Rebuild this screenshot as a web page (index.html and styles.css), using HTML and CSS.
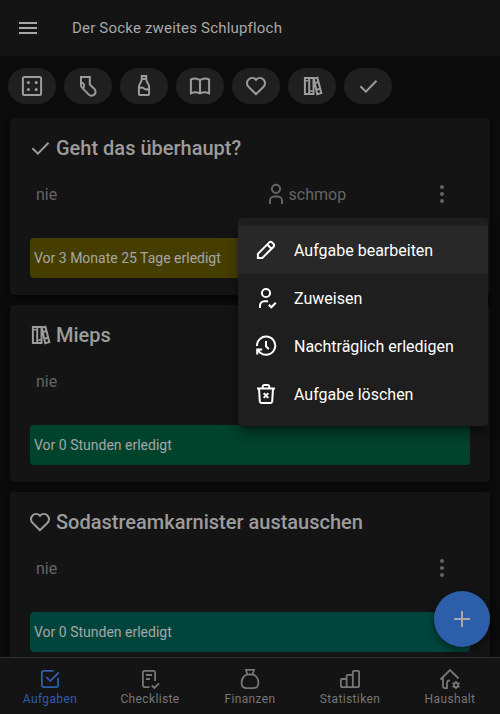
FILE: index.html
```html
<!DOCTYPE html>
<html lang="de">
<head>
<meta charset="utf-8">
<title>Der Socke zweites Schlupfloch</title>
<link rel="stylesheet" href="styles.css">
</head>
<body>
<svg class="defs" width="0" height="0" aria-hidden="true">
  <symbol id="heart" viewBox="0 0 24 24"><path d="M12 20.200l-7.400-7.300a5.100 5.100 0 0 1 0-7.400c2-1.900 5.100-1.900 7.100 0l.3.400.3-.4c2-1.900 5.100-1.900 7.100 0a5.100 5.100 0 0 1 0 7.400z"/></symbol>
  <symbol id="check" viewBox="0 0 24 24"><path d="M4.400 12.300l5.500 5.300L20.500 6.800"/></symbol>
  <symbol id="books" viewBox="0 0 24 24"><path d="M4.900 3.900h4.300v16.200H4.900zM9.200 3.900h4.300v16.200H9.200zM13.800 4.600l3.600-.9 3.900 15.400-4.100 1.100zM14.900 9l3.800-1M16.200 15.700l4-1M7 6v1.500M11.400 16.300v1.600"/></symbol>
  <symbol id="dots" viewBox="0 0 24 24"><g fill="currentColor" stroke="none"><circle cx="12" cy="5" r="2"/><circle cx="12" cy="12" r="2"/><circle cx="12" cy="19" r="2"/></g></symbol>
</svg>

<header class="topbar">
  <svg class="icon" viewBox="0 0 24 24"><path d="M3 7h18M3 12h18M3 17h18"/></svg>
  <h1>Der Socke zweites Schlupfloch</h1>
</header>

<nav class="chips">
  <button class="chip"><svg class="icon" viewBox="0 0 24 24"><rect x="2.900" y="2.900" width="18.200" height="18.200" rx="1.500"/><g fill="currentColor" stroke="none"><circle cx="8.400" cy="8.500" r="1.500"/><circle cx="16.200" cy="8.500" r="1.500"/><circle cx="8.400" cy="15.500" r="1.500"/><circle cx="16.200" cy="15.500" r="1.500"/></g></svg></button>
  <button class="chip"><svg class="icon" viewBox="0 0 24 24"><path d="M5 2.900h8.800v7.600l4.500 4.400a3.900 3.900 0 0 1-5.500 5.700l-7-7.200a3 3 0 0 1-.8-2.200zM5 8.300c2.800.5 4.200 3 2.300 6.300"/></svg></button>
  <button class="chip"><svg class="icon" viewBox="0 0 24 24"><path d="M9.800 1.900h4.400v3H9.800zM9.800 5c0 3.500-2.900 4.500-2.900 8v6.500c0 1 .7 1.600 1.600 1.600h7c.9 0 1.600-.6 1.600-1.600V13c0-3.500-2.900-4.500-2.900-8M6.900 14.500c2.200-1.800 3.600-1.200 5.100 0s3 1.700 5.100 0"/></svg></button>
  <button class="chip"><svg class="icon" viewBox="0 0 24 24"><path d="M12 6.300C9.500 4.300 5.500 4.300 2.900 5.500v13.800c2.600-1.200 6.600-1.200 9.100.2 2.500-1.400 6.500-1.400 9.100-.2V5.500c-2.600-1.200-6.600-1.200-9.100.8zv13"/></svg></button>
  <button class="chip"><svg class="icon"><use href="#heart"/></svg></button>
  <button class="chip"><svg class="icon"><use href="#books"/></svg></button>
  <button class="chip"><svg class="icon"><use href="#check"/></svg></button>
</nav>

<main class="tasks">
  <article class="card">
    <h2><svg class="icon"><use href="#check"/></svg>Geht das überhaupt?</h2>
    <div class="meta">
      <span class="due">nie</span>
      <span class="person"><svg class="icon" viewBox="0 0 24 24"><circle cx="12" cy="6.800" r="4.100"/><path d="M6 22v-3.300a4.200 4.200 0 0 1 4.200-4.200h3.600a4.200 4.200 0 0 1 4.200 4.200V22"/></svg>schmop</span>
      <svg class="icon"><use href="#dots"/></svg>
    </div>
    <div class="status olive">Vor 3 Monate 25 Tage erledigt</div>
  </article>
  <article class="card">
    <h2><svg class="icon"><use href="#books"/></svg>Mieps</h2>
    <div class="meta">
      <span class="due">nie</span>
      <span class="person"></span>
      <svg class="icon"><use href="#dots"/></svg>
    </div>
    <div class="status green">Vor 0 Stunden erledigt</div>
  </article>
  <article class="card">
    <h2><svg class="icon"><use href="#heart"/></svg>Sodastreamkarnister austauschen</h2>
    <div class="meta">
      <span class="due">nie</span>
      <span class="person"></span>
      <svg class="icon"><use href="#dots"/></svg>
    </div>
    <div class="status teal">Vor 0 Stunden erledigt</div>
  </article>
</main>

<button class="fab"><svg class="icon" viewBox="0 0 24 24"><path d="M12 4v16M4 12h16"/></svg></button>

<nav class="tabs">
  <a class="tab active"><svg class="icon" viewBox="0 0 24 24"><path d="M15.500 3.900H5.400c-.8 0-1.500.7-1.500 1.500v13.200c0 .8.7 1.500 1.500 1.500h13.200c.8 0 1.500-.7 1.500-1.500V11M8.300 10.200l3.900 3.900 8.600-8.600"/></svg>Aufgaben</a>
  <a class="tab"><svg class="icon" viewBox="0 0 24 24"><path d="M11.500 20.100H6.400c-.8 0-1.500-.7-1.500-1.500V5.400c0-.8.7-1.500 1.500-1.500h9.200c.8 0 1.500.7 1.500 1.500V14M8 8h6M8 12h4M13.800 18.500l2.500 2.500 4.700-4.700"/></svg>Checkliste</a>
  <a class="tab"><svg class="icon" viewBox="0 0 24 24"><path d="M8 2.900h8l-1.300 4.200c3.600 1.600 5.700 5.500 5.700 8.800 0 3.500-2.500 5.200-5.400 5.200H9c-2.900 0-5.400-1.700-5.400-5.200 0-3.300 2.100-7.200 5.700-8.800zM9 7.500h6"/></svg>Finanzen</a>
  <a class="tab"><svg class="icon" viewBox="0 0 24 24"><path d="M2.900 13c0-.6.400-1 1-1h4.700v8.100H3.900c-.6 0-1-.4-1-1zM8.600 20.100V8.800c0-.6.400-1 1-1h5.200v12.300zM14.800 20.100V4.900c0-.6.400-1 1-1h4.300c.6 0 1 .4 1 1v14.200c0 .6-.4 1-1 1z"/></svg>Statistiken</a>
  <a class="tab"><svg class="icon" viewBox="0 0 24 24"><path d="M2.500 12.500L12 3l8.500 8.500M5 11v8.600c0 .8.600 1.500 1.400 1.500H9v-5.300c0-1.500 1-2.500 3-2.500"/><circle cx="18" cy="18" r="2.200"/><path d="M18 14v2M18 20v2M14.500 16l1.700 1M19.800 19l1.700 1M14.500 20l1.700-1M19.800 17l1.700-1"/></svg>Haushalt</a>
</nav>

<div class="menu">
  <a class="item selected"><svg class="icon" viewBox="0 0 24 24"><path d="M3.900 20.100v-4.300L15.300 4.400a1.900 1.900 0 0 1 2.700 0l1.600 1.600a1.900 1.900 0 0 1 0 2.700L8.200 20.100zM13.200 6.500l4.300 4.300"/></svg>Aufgabe bearbeiten</a>
  <a class="item"><svg class="icon" viewBox="0 0 24 24"><circle cx="12" cy="7" r="4.100"/><path d="M6 22v-2.500a4.200 4.200 0 0 1 4.200-4.200h3.900M14.800 18.800l2.500 2.500 4.500-4.500"/></svg>Zuweisen</a>
  <a class="item"><svg class="icon" viewBox="0 0 24 24"><path d="M3 12a9.100 9.100 0 1 1 3.300 6.700L3.200 15.700M3.200 20.500v-4.900h5M12 7v5.300l2.800 2.800"/></svg>Nachträglich erledigen</a>
  <a class="item"><svg class="icon" viewBox="0 0 24 24"><path d="M3 6.400h18M8.700 6.200V4.400c0-.8.600-1.500 1.400-1.500h3.800c.8 0 1.400.7 1.400 1.500v1.800M5 6.500l.8 13c.1.900.7 1.600 1.600 1.600h9.200c.9 0 1.500-.7 1.600-1.600l.8-13M9.700 11.300l4.600 4.600M14.300 11.300l-4.600 4.600"/></svg>Aufgabe löschen</a>
</div>
</body>
</html>
```
FILE: styles.css
```css
* { box-sizing: border-box; }

html, body { height: 100%; }

body {
  margin: 0;
  overflow: hidden;
  display: flex;
  flex-direction: column;
  background: #0b0b0b;
  color: #9c9c9c;
  font-family: Roboto, "Liberation Sans", sans-serif;
  font-size: 16px;
}

h1, h2 { margin: 0; }

button { border: 0; padding: 0; font: inherit; color: inherit; }

.defs { position: absolute; }

.icon {
  display: block;
  flex: none;
  width: 24px;
  height: 24px;
  fill: none;
  stroke: currentColor;
  stroke-width: 2;
}

.topbar {
  flex: none;
  height: 56px;
  padding: 0 16px;
  display: flex;
  align-items: center;
  gap: 32px;
  background: #141414;
  color: #a8a8a8;
}

.topbar h1 {
  font-size: 15px;
  font-weight: 400;
  letter-spacing: 0.19px;
}

.chips {
  flex: none;
  display: flex;
  gap: 8px;
  padding: 12px 8px 14px;
}

.chip {
  width: 48px;
  height: 36px;
  display: grid;
  place-items: center;
  border-radius: 18px;
  background: #1f1f1f;
}

.tasks {
  flex: 1;
  min-height: 0;
  overflow: hidden;
  display: flex;
  flex-direction: column;
  gap: 10px;
  padding: 0 10px;
}

.card {
  flex: none;
  height: 177px;
  padding: 18px 20px 17px;
  border-radius: 4px;
  background: #141414;
  box-shadow: 0 2px 5px #050505;
}

.card h2 {
  display: flex;
  align-items: center;
  gap: 4px;
  height: 24px;
  margin-left: -2px;
  font-size: 20px;
  font-weight: 500;
  line-height: 24px;
}

.meta {
  display: flex;
  align-items: center;
  height: 24px;
  margin: 22px 16px 32px 6px;
  color: #646464;
}

.due { width: 228px; }

.person {
  flex: 1;
  display: flex;
  align-items: center;
  gap: 0.6px;
}

.status {
  height: 40px;
  padding: 0 4px;
  border-radius: 4px;
  color: #a6a6a6;
  font-size: 14px;
  line-height: 40px;
}

.olive { background: #453e00; }
.green { background: #00432c; }
.teal { background: #00453d; }

.tabs {
  flex: none;
  display: flex;
  height: 57px;
  border-top: 1px solid #303030;
  background: #141414;
  color: #767676;
}

.tab {
  flex: 1;
  display: flex;
  flex-direction: column;
  align-items: center;
  padding-top: 9px;
  font-size: 12px;
  line-height: 16px;
  letter-spacing: 0.36px;
}

.tab .icon { stroke-width: 1.8; }

.tab.active { color: #2c5eae; }

.fab {
  position: absolute;
  right: 10px;
  bottom: 67px;
  width: 56px;
  height: 56px;
  display: grid;
  place-items: center;
  border-radius: 50%;
  background: #2c5eaa;
  color: #a8a8a8;
  box-shadow: 0 3px 8px rgba(0, 0, 0, 0.5);
}

.menu {
  position: absolute;
  top: 218px;
  right: 12px;
  width: 250px;
  padding: 8px 0;
  border-radius: 4px;
  background: #1e1e1e;
  color: #fff;
  box-shadow: 0 5px 5px -3px rgba(0, 0, 0, 0.4), 0 8px 14px rgba(0, 0, 0, 0.35);
}

.item {
  display: flex;
  align-items: center;
  gap: 16px;
  height: 48px;
  padding: 0 16px;
}

.item.selected { background: #282828; }
```
